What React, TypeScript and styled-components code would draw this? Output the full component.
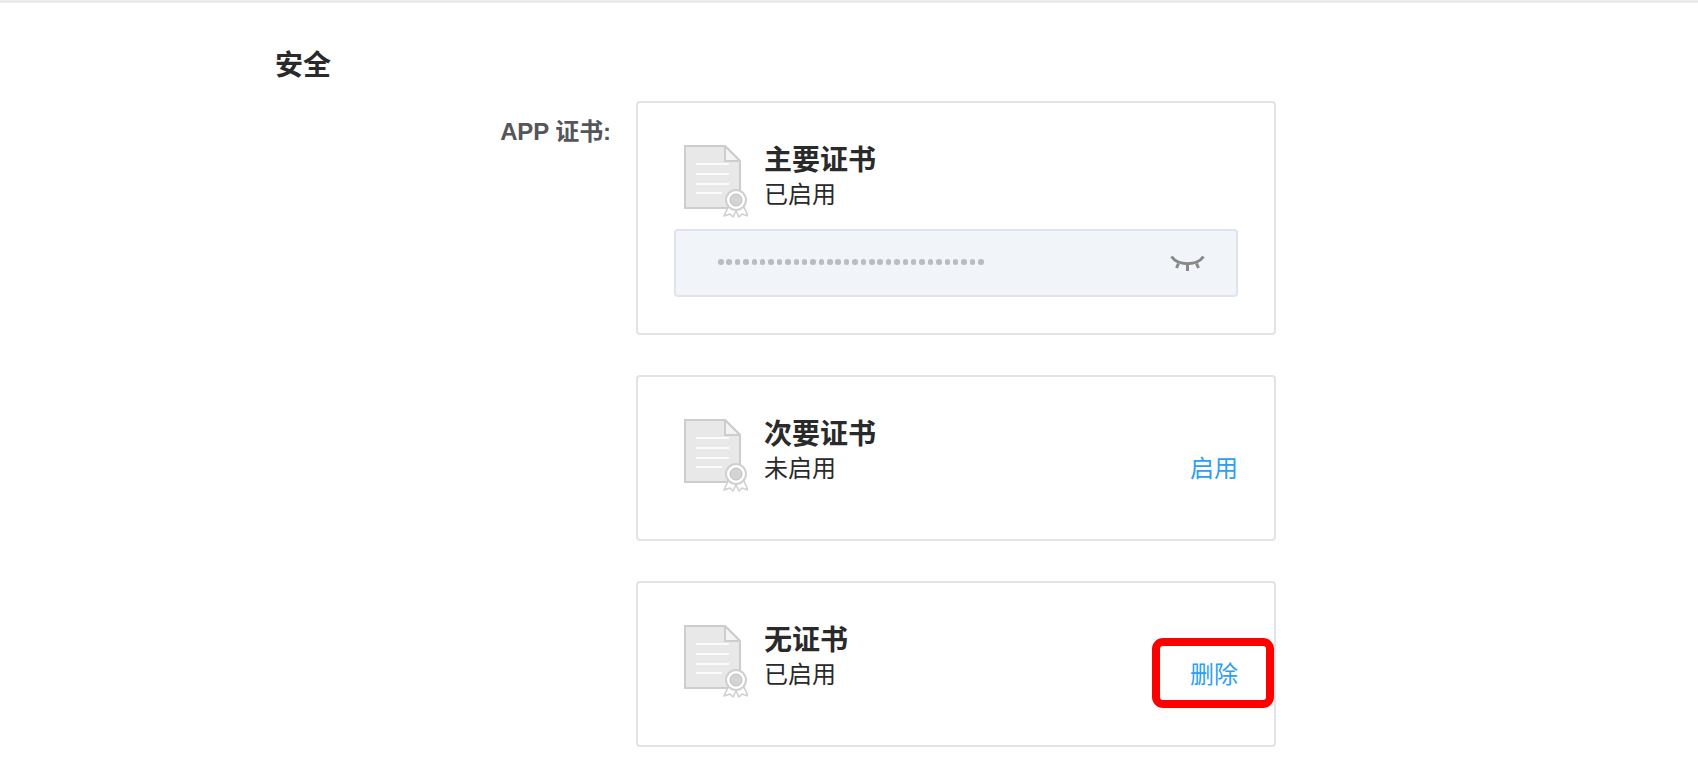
import React from "react";
import styled, { createGlobalStyle } from "styled-components";

const Global = createGlobalStyle`
  html, body { margin: 0; padding: 0; background: #fff; }
  body { font-family: "Liberation Sans", "Noto Sans CJK SC", sans-serif; overflow: hidden; }
  * { box-sizing: border-box; }
`;

const Page = styled.div`
  position: relative;
  width: 1698px;
  height: 780px;
  background: #fff;
  border-top: 3px solid #ebebeb;
  overflow: hidden;
`;

const SectionTitle = styled.h2`
  margin: 0;
  padding: 45px 0 0 275px;
  font-size: 28px;
  line-height: 36px;
  font-weight: 700;
  color: #2a2a2a;
`;

const Row = styled.div`
  display: grid;
  grid-template-columns: 611px 640px;
  column-gap: 25px;
  margin-top: 17px;
`;

const Label = styled.div`
  text-align: right;
  font-size: 24px;
  line-height: 32px;
  font-weight: 700;
  color: #555659;
  padding-top: 15px;
  letter-spacing: -0.1px;
`;

const Cards = styled.div`
  display: flex;
  flex-direction: column;
  gap: 40px;
`;

const Card = styled.section<{ $height: number }>`
  height: ${(p) => p.$height}px;
  padding: 42px 36px 0;
  border: 2px solid #e3e3e3;
  border-radius: 4px;
  background: #fff;
`;

const Head = styled.div`
  display: flex;
  padding-left: 10px;
`;

const CertIcon = styled.svg`
  display: block;
  flex: none;
  width: 64px;
  height: 73px;
`;

const Info = styled.div`
  margin-left: 16px;
  display: flex;
  flex-direction: column;
`;

const CardTitle = styled.div`
  font-size: 28px;
  line-height: 34px;
  font-weight: 700;
  color: #2a2a2a;
  margin-top: -1px;
`;

const Status = styled.div`
  font-size: 24px;
  line-height: 34px;
  color: #2a2a2a;
`;

const Action = styled.a`
  margin-left: auto;
  align-self: flex-end;
  font-size: 24px;
  line-height: 34px;
  color: #2b9ff2;
  margin-bottom: 6px;
`;

const SecretBox = styled.div`
  display: flex;
  align-items: center;
  justify-content: space-between;
  height: 68px;
  margin-top: 11px;
  padding: 0 31px 0 42px;
  background: #f1f4f9;
  border: 2px solid #dfe3ec;
  border-radius: 4px;
`;

const Dots = styled.div`
  display: flex;
  gap: 2.9px;
  margin-top: -2px;
`;

const Dot = styled.span`
  width: 5.5px;
  height: 5.5px;
  border-radius: 50%;
  background: #b9bcc3;
`;

const EyeIcon = styled.svg`
  display: block;
  width: 35px;
  height: 18px;
  margin-top: 1px;
`;

const Highlight = styled.div`
  position: absolute;
  left: 1152px;
  top: 635px;
  width: 122px;
  height: 70px;
  border: 8px solid #ff0000;
  border-radius: 11px;
  pointer-events: none;
`;

const Cert = () => (
  <CertIcon viewBox="0 0 64 73" aria-hidden="true">
    <path d="M1 1H41L56 16V63H1Z" fill="#e8e8e8" stroke="#cdcdcd" strokeWidth="2" />
    <path d="M41 1V16H56Z" fill="#f4f4f4" stroke="#cdcdcd" strokeWidth="2" strokeLinejoin="round" />
    <path d="M12 19H45M12 29H45M12 39H45M12 48H38" stroke="#fbfbfb" strokeWidth="2" />
    <path d="M45 60L40 71L46 69L49 72L52 66L55 72L58 69L64 71L59 60Z" fill="#fff" stroke="#d0d0d0" strokeWidth="1.6" strokeLinejoin="round" />
    <circle cx="52" cy="55" r="10" fill="#fff" stroke="#d0d0d0" strokeWidth="2" />
    <circle cx="52" cy="55" r="6" fill="#d4d4d4" stroke="#bdbdbd" strokeWidth="1" />
  </CertIcon>
);

const Eye = () => (
  <EyeIcon viewBox="0 0 35 18" fill="none" stroke="#888888" strokeWidth="3" aria-hidden="true">
    <path d="M1.5 1.5C8 11 27 11 33.5 1.5" />
    <path d="M8.5 8.5L6.5 13M17.5 10V16M26.5 8.5L28.5 13" />
  </EyeIcon>
);

export default function App() {
  return (
    <Page>
      <Global />
      <SectionTitle>安全</SectionTitle>
      <Row>
        <Label>APP 证书:</Label>
        <Cards>
          <Card $height={234}>
            <Head>
              <Cert />
              <Info>
                <CardTitle>主要证书</CardTitle>
                <Status>已启用</Status>
              </Info>
            </Head>
            <SecretBox>
              <Dots>
                {Array.from({ length: 32 }, (_, i) => (
                  <Dot key={i} />
                ))}
              </Dots>
              <Eye />
            </SecretBox>
          </Card>
          <Card $height={166}>
            <Head>
              <Cert />
              <Info>
                <CardTitle>次要证书</CardTitle>
                <Status>未启用</Status>
              </Info>
              <Action>启用</Action>
            </Head>
          </Card>
          <Card $height={166}>
            <Head>
              <Cert />
              <Info>
                <CardTitle>无证书</CardTitle>
                <Status>已启用</Status>
              </Info>
              <Action>删除</Action>
            </Head>
          </Card>
        </Cards>
      </Row>
      <Highlight />
    </Page>
  );
}
